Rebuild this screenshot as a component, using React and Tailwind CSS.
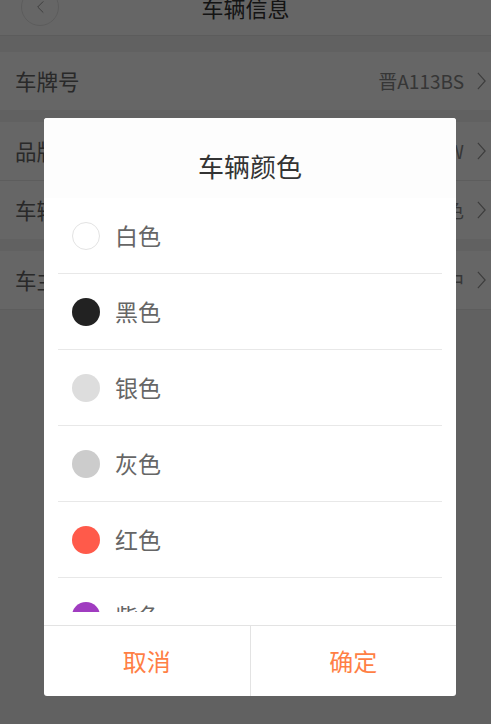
import React from 'react';

const rows = [
  { label: '车牌号', value: '晋A113BS', gapAfter: true },
  { label: '品牌', value: 'VW', gapAfter: false },
  { label: '车辆颜色', value: '白色', gapAfter: true },
  { label: '车主', value: '张三中', gapAfter: false },
];

const colors = [
  { name: '白色', dot: 'bg-white border border-[#e3e3e3]' },
  { name: '黑色', dot: 'bg-[#222222]' },
  { name: '银色', dot: 'bg-[#dddddd]' },
  { name: '灰色', dot: 'bg-[#cccccc]' },
  { name: '红色', dot: 'bg-[#ff5a4a]' },
  { name: '紫色', dot: 'bg-[#a03cc0]' },
  { name: '蓝色', dot: 'bg-[#3c7ce0]' },
];

const Chevron = ({ className }) => (
  <svg viewBox="0 0 12 22" className={className} fill="none" stroke="currentColor" strokeWidth="1.3">
    <path d="M2 2l8 9-8 9" />
  </svg>
);

const App = () => {
  return (
    <div className="relative h-[724px] w-full overflow-hidden bg-[#f2f2f2] font-['Noto_Sans_CJK_SC','Noto_Sans',sans-serif]">
      {/* page under the dialog */}
      <header className="flex h-[36px] items-center border-b border-[#e6e6e6] bg-white px-[21px] pb-[22px]">
        <div className="flex h-[38px] w-[38px] shrink-0 items-center justify-center rounded-full border border-[#e6e6e6]">
          <svg viewBox="0 0 12 20" className="h-[14px] w-[9px] text-[#999]" fill="none" stroke="currentColor" strokeWidth="1.4">
            <path d="M10 2L2 10l8 8" />
          </svg>
        </div>
        <h1 className="flex-1 pr-[38px] text-center text-[22px] leading-none text-[#333]">车辆信息</h1>
      </header>

      <div className="pt-[16px]">
        {rows.map((r) => (
          <div key={r.label} className={r.gapAfter ? 'mb-[12px]' : 'border-b border-[#e8e8e8]'}>
            <div className="flex h-[58px] items-center bg-white pl-[15px] pr-[4px]">
              <span className="flex-1 text-[21.5px] text-[#666]">{r.label}</span>
              <span className="text-[19px] text-[#888]">{r.value}</span>
              <Chevron className="ml-[12px] h-[20px] w-[11px] text-[#999]" />
            </div>
          </div>
        ))}
      </div>

      {/* dim overlay */}
      <div className="absolute inset-0 bg-black/60" />

      {/* dialog */}
      <div className="absolute left-[44px] top-[118px] flex h-[578px] w-[412px] flex-col overflow-hidden rounded-[3px] bg-white">
        <div className="flex h-[80px] shrink-0 items-center justify-center bg-[#fdfdfd] pt-[14px] text-[26px] text-[#333]">
          车辆颜色
        </div>
        <div className="mx-[14px] h-[414px] shrink-0 overflow-hidden">
          {colors.map((c) => (
            <div key={c.name} className="flex h-[76px] items-center border-b border-[#e8e8e8] pl-[14px]">
              <span className={`h-[28px] w-[28px] shrink-0 rounded-full ${c.dot}`} />
              <span className="ml-[15px] text-[23px] text-[#666]">{c.name}</span>
            </div>
          ))}
        </div>
        <div className="mt-auto flex h-[71px] border-t border-[#e3e3e3]">
          <button className="flex-1 border-r border-[#e3e3e3] text-[24px] text-[#ff7f45]">取消</button>
          <button className="flex-1 text-[24px] text-[#ff7f45]">确定</button>
        </div>
      </div>
    </div>
  );
};

export default App;
